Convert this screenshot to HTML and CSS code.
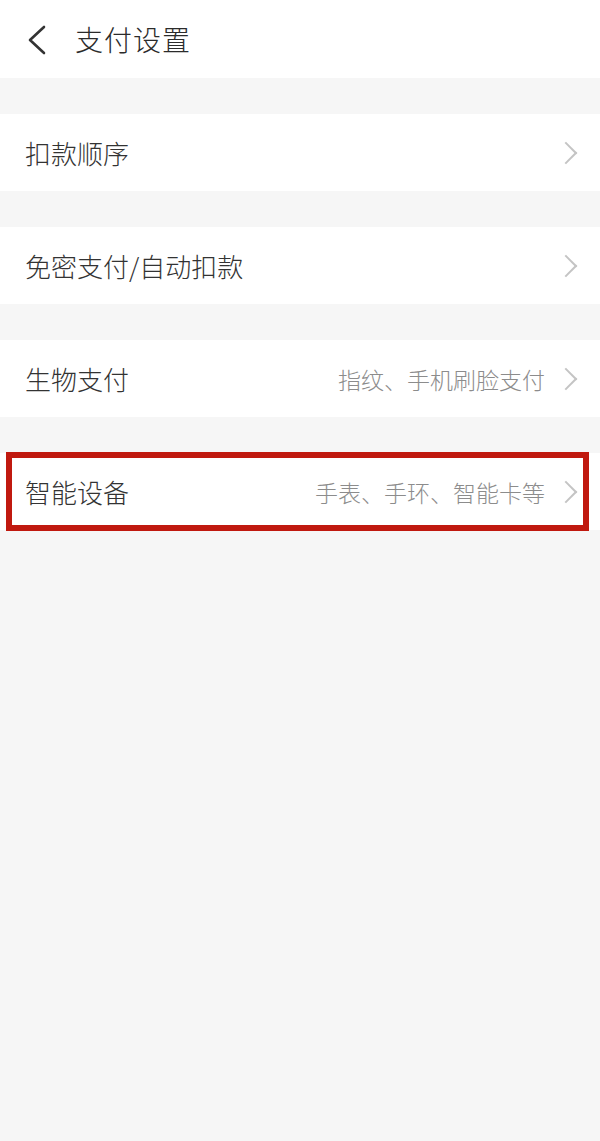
FILE: index.html
```html
<!DOCTYPE html>
<html lang="zh-CN">
<head>
  <meta charset="UTF-8">
  <title>支付设置</title>
  <link rel="stylesheet" href="styles.css">
</head>
<body>
  <!-- 顶部导航 -->
  <div class="topbar">
    <span class="back">
      <svg width="20" height="30" viewBox="0 0 20 30"><path d="M17 2 L3 15 L17 28" fill="none" stroke="#333" stroke-width="2.6" stroke-linecap="round" stroke-linejoin="round"/></svg>
    </span>
    <h1>支付设置</h1>
  </div>

  <div class="lista">
    <div class="grupo">
      <div class="item">
        <span class="rotulo">扣款顺序</span>
        <span class="seta"></span>
      </div>
    </div>
    <div class="grupo">
      <div class="item">
        <span class="rotulo">免密支付/自动扣款</span>
        <span class="seta"></span>
      </div>
    </div>
    <div class="grupo">
      <div class="item">
        <span class="rotulo">生物支付</span>
        <span class="valor">指纹、手机刷脸支付</span>
        <span class="seta"></span>
      </div>
    </div>
    <div class="grupo">
      <div class="item destaque">
        <span class="rotulo">智能设备</span>
        <span class="valor">手表、手环、智能卡等</span>
        <span class="seta"></span>
      </div>
    </div>
  </div>
</body>
</html>
```

FILE: styles.css
```css
body {
  margin: 0;
  padding: 0;
  background-color: #f6f6f6;
  font-family: "Noto Sans CJK SC", "Noto Sans", sans-serif;
  font-weight: 300;
  color: #333;
  min-height: 1141px;
}

.topbar {
  height: 78px;
  background-color: #ffffff;
  display: flex;
  align-items: center;
  padding-left: 27px;
}

.topbar .back {
  display: flex;
  width: 20px;
  height: 30px;
  margin-top: 1px;
}

.topbar h1 {
  margin: 0 0 0 28px;
  font-size: 28px;
  font-weight: 300;
  color: #2b2b2b;
  letter-spacing: 1px;
}

.grupo {
  margin-top: 36px;
  background-color: #ffffff;
}

.item {
  height: 77px;
  display: flex;
  align-items: center;
  padding: 0 23px 0 25px;
  position: relative;
}

.rotulo {
  font-size: 26px;
  flex: 1;
  color: #333;
}

.valor {
  font-size: 23px;
  color: #8c8c8c;
  margin-right: 18px;
}

.seta {
  width: 14px;
  height: 22px;
  position: relative;
}

.seta::before {
  content: "";
  position: absolute;
  left: -5px;
  top: 3px;
  width: 14px;
  height: 14px;
  border-top: 2px solid #c4c4c4;
  border-right: 2px solid #c4c4c4;
  transform: rotate(45deg);
  transform-origin: center;
}

/* marcação vermelha em volta do item */
.destaque::after {
  content: "";
  position: absolute;
  top: -1px;
  bottom: -1px;
  left: 6px;
  right: 11px;
  border: 6px solid #c0190f;
}
```
